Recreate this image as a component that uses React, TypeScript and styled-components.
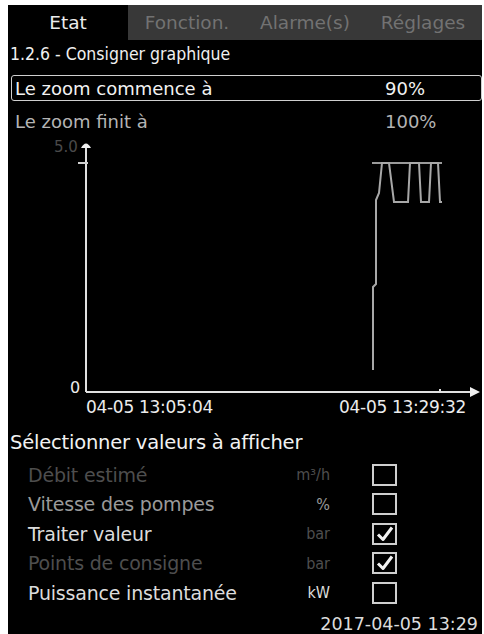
import styled, { createGlobalStyle } from 'styled-components';

const GlobalStyle = createGlobalStyle`
  html, body {
    margin: 0;
    padding: 0;
    background: #ffffff;
  }
  body {
    font-family: "DejaVu Sans", "Liberation Sans", sans-serif;
  }
`;

const Screen = styled.div`
  display: flex;
  flex-direction: column;
  margin: 5px 2px 0 8px;
  height: 629px;
  background: #000;
  color: #e6e6e6;
  overflow: hidden;
`;

const TabBar = styled.div`
  display: grid;
  grid-template-columns: 120px 1fr 1fr 1fr;
  height: 35px;
  background: #383838;
`;

const Tab = styled.div<{ $active?: boolean }>`
  display: flex;
  align-items: center;
  justify-content: center;
  font-size: 18.5px;
  background: ${({ $active }) => ($active ? '#000' : 'transparent')};
  color: ${({ $active }) => ($active ? '#ececec' : '#727272')};
`;

const Title = styled.div`
  height: 28px;
  display: flex;
  align-items: center;
  padding-left: 2px;
  font-family: "DejaVu Sans Condensed", "DejaVu Sans", sans-serif;
  font-size: 17.5px;
  color: #f0f0f0;
`;

const SettingRow = styled.div<{ $selected?: boolean; $dim?: boolean }>`
  display: flex;
  align-items: center;
  height: 26px;
  margin: 7px 0 0 3px;
  padding: 0 0 0 3px;
  border: 1.5px solid ${({ $selected }) => ($selected ? '#cfcfcf' : 'transparent')};
  border-radius: 3px;
  font-size: 18px;
  color: ${({ $dim }) => ($dim ? '#b4b4b4' : '#f2f2f2')};
  box-sizing: border-box;
`;

const SettingLabel = styled.span`
  flex: 1;
`;

const SettingValue = styled.span`
  width: 96px;
  text-align: left;
`;

const Chart = styled.svg`
  display: block;
  width: 474px;
  height: 260px;
  margin-top: 4px;
`;

const AxisLabels = styled.div`
  display: flex;
  justify-content: space-between;
  height: 18px;
  align-items: center;
  padding: 0 16px 0 78px;
  font-size: 17px;
  letter-spacing: -0.3px;
  color: #ececec;
`;

const SectionHeading = styled.div`
  height: 24px;
  margin-top: 14px;
  display: flex;
  align-items: center;
  padding-left: 2px;
  font-size: 19.5px;
  letter-spacing: -0.2px;
  color: #f2f2f2;
`;

const List = styled.div`
  display: flex;
  flex-direction: column;
  margin-top: 6px;
`;

type Tone = 'bright' | 'mid' | 'dim';

const toneColor: Record<Tone, string> = {
  bright: '#dcdcdc',
  mid: '#9a9a9a',
  dim: '#4e4e4e',
};

const ValueRow = styled.div`
  display: grid;
  grid-template-columns: 252px 50px 67px;
  align-items: center;
  height: 29.5px;
  padding-left: 20px;
`;

const ValueLabel = styled.span<{ $tone: Tone }>`
  font-size: 19px;
  letter-spacing: -0.2px;
  white-space: nowrap;
  color: ${({ $tone }) => toneColor[$tone]};
`;

const Unit = styled.span<{ $tone: Tone }>`
  font-family: "DejaVu Sans Condensed", "DejaVu Sans", sans-serif;
  font-size: 16px;
  text-align: right;
  white-space: nowrap;
  color: ${({ $tone }) => toneColor[$tone]};
`;

const Box = styled.span`
  justify-self: end;
  display: flex;
  align-items: center;
  justify-content: center;
  width: 25px;
  height: 22px;
  box-sizing: border-box;
  border: 2px solid #cfcfcf;
`;

const Footer = styled.div`
  margin-top: auto;
  height: 20px;
  padding: 0 4px 0 0;
  text-align: right;
  font-size: 17.5px;
  color: #dcdcdc;
`;

type ValueItem = {
  label: string;
  unit: string;
  labelTone: Tone;
  unitTone: Tone;
  checked: boolean;
};

const values: ValueItem[] = [
  { label: 'Débit estimé', unit: 'm³/h', labelTone: 'dim', unitTone: 'dim', checked: false },
  { label: 'Vitesse des pompes', unit: '%', labelTone: 'mid', unitTone: 'mid', checked: false },
  { label: 'Traiter valeur', unit: 'bar', labelTone: 'bright', unitTone: 'dim', checked: true },
  { label: 'Points de consigne', unit: 'bar', labelTone: 'dim', unitTone: 'dim', checked: true },
  { label: 'Puissance instantanée', unit: 'kW', labelTone: 'bright', unitTone: 'bright', checked: false },
];

const trace =
  '365,232 365,149 368,146 368,62 371,55 374,25 381,25 386,64 400,64 402,25 411,25 413,64 421,64 423,25 430,25 432,64 434,64';

const Check = () => (
  <svg width="18" height="16" viewBox="0 0 18 16">
    <path d="M2 8.5 L7 13.5 L16 1.5" fill="none" stroke="#f2f2f2" strokeWidth="3" strokeLinejoin="round" />
  </svg>
);

const TrendChart = () => (
  <Chart viewBox="0 0 474 260">
    <text x="46" y="14" fill="#4a4a4a" fontSize="15" fontFamily="DejaVu Sans">5.0</text>
    <text x="62" y="255" fill="#ececec" fontSize="16" fontFamily="DejaVu Sans">0</text>
    <line x1="78" y1="6" x2="78" y2="254" stroke="#e0e0e0" strokeWidth="2" />
    <path d="M73 10 Q78 1 83 10 Z" fill="#f0f0f0" />
    <line x1="70" y1="25" x2="80" y2="25" stroke="#d0d0d0" strokeWidth="2" />
    <line x1="78" y1="254" x2="464" y2="254" stroke="#e0e0e0" strokeWidth="2" />
    <path d="M462 249 L472 254 L462 259 Z" fill="#f0f0f0" />
    <line x1="432" y1="251" x2="432" y2="255" stroke="#e0e0e0" strokeWidth="2" />
    <line x1="364" y1="25" x2="434" y2="25" stroke="#9a9a9a" strokeWidth="2" />
    <polyline points={trace} fill="none" stroke="#a8a8a8" strokeWidth="2" />
  </Chart>
);

const App = () => (
  <>
    <GlobalStyle />
    <Screen>
      <TabBar>
        <Tab $active>Etat</Tab>
        <Tab>Fonction.</Tab>
        <Tab>Alarme(s)</Tab>
        <Tab>Réglages</Tab>
      </TabBar>
      <Title>1.2.6 - Consigner graphique</Title>
      <SettingRow $selected>
        <SettingLabel>Le zoom commence à</SettingLabel>
        <SettingValue>90%</SettingValue>
      </SettingRow>
      <SettingRow $dim>
        <SettingLabel>Le zoom finit à</SettingLabel>
        <SettingValue>100%</SettingValue>
      </SettingRow>
      <TrendChart />
      <AxisLabels>
        <span>04-05 13:05:04</span>
        <span>04-05 13:29:32</span>
      </AxisLabels>
      <SectionHeading>Sélectionner valeurs à afficher</SectionHeading>
      <List>
        {values.map((item) => (
          <ValueRow key={item.label}>
            <ValueLabel $tone={item.labelTone}>{item.label}</ValueLabel>
            <Unit $tone={item.unitTone}>{item.unit}</Unit>
            <Box>{item.checked && <Check />}</Box>
          </ValueRow>
        ))}
      </List>
      <Footer>2017-04-05 13:29</Footer>
    </Screen>
  </>
);

export default App;
